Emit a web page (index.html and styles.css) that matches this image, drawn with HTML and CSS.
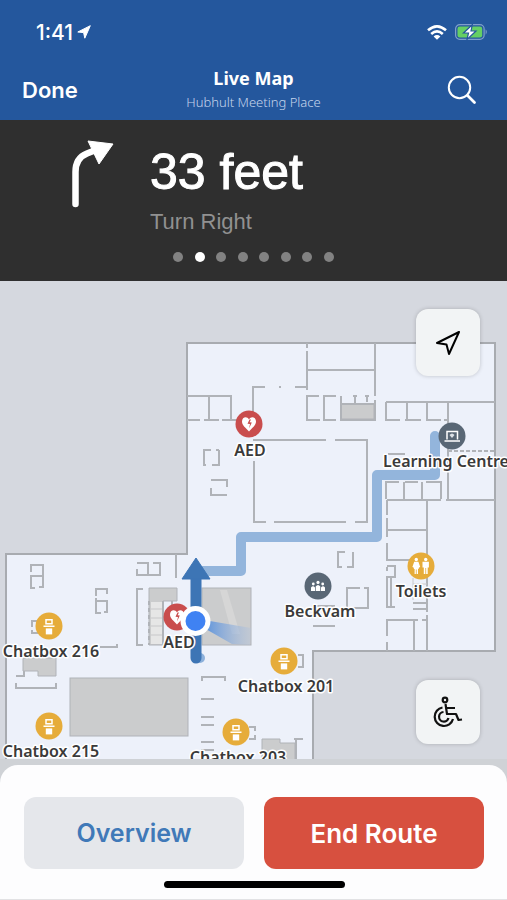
FILE: index.html
```html
<!DOCTYPE html>
<html lang="en">
<head>
  <meta charset="UTF-8"/>
  <meta name="viewport" content="width=device-width, initial-scale=1"/>
  <title>Live Map</title>
  <link rel="stylesheet" href="styles.css">
</head>
<body>

<header class="top">
  <div class="status-bar">
    <div class="time">1:41
      <svg width="14" height="14" viewBox="0 0 14 14"><path d="M13.3 0.7 L0.8 7 L6.6 7.6 L7.8 13.2 Z" fill="#fff" stroke="#fff" stroke-linejoin="round"/></svg>
    </div>
    <div class="status-icons">
      <svg width="20" height="15" viewBox="0 0 20 15" fill="none" stroke="#fff" stroke-width="2.6">
        <path d="M1 5.3 Q10 -2.6 19 5.3"/>
        <path d="M4.2 8.9 Q10 3.8 15.8 8.9"/>
        <path d="M10 14.8 L6.6 11.4 Q10 8.6 13.4 11.4 Z" fill="#fff" stroke="none"/>
      </svg>
      <svg width="33" height="16" viewBox="0 0 33 16">
        <rect x="0.6" y="0.6" width="28.5" height="14.8" rx="4.2" fill="none" stroke="#7f9fcb" stroke-width="1.2"/>
        <rect x="2.5" y="2.5" width="24.7" height="11" rx="2.3" fill="#65cf63"/>
        <path d="M30.6 5.3 Q33 8 30.6 10.7 Z" fill="#7f9fcb"/>
        <path d="M17.3 0.8 L8.5 9 H13.5 L12 15.4 L21 7 H16 Z" fill="#fff" stroke="#24579d" stroke-width="1.2"/>
      </svg>
    </div>
  </div>
  <nav class="nav-bar">
    <button class="done" type="button">Done</button>
    <div class="titles">
      <h1>Live Map</h1>
      <p>Hubhult Meeting Place</p>
    </div>
    <button class="search" type="button" aria-label="Search">
      <svg width="30" height="30" viewBox="0 0 30 30" fill="none" stroke="#fff" stroke-linecap="round">
        <circle cx="12.5" cy="12.5" r="10.7" stroke-width="2"/>
        <path d="M20.5 20.5 L27.5 27.5" stroke-width="2.8"/>
      </svg>
    </button>
  </nav>
</header>

<section class="banner">
  <div class="step">
    <svg class="turn" width="46" height="70" viewBox="0 0 46 70">
      <path d="M5.5 64 V32 Q5.5 18 17 13.5 L27 9.5" fill="none" stroke="#fff" stroke-width="6.5" stroke-linecap="round"/>
      <path d="M18 1 L43 4 L29 24 Z" fill="#fff" stroke="#fff" stroke-linejoin="round"/>
    </svg>
    <div>
      <div class="distance">33 feet</div>
      <div class="direction">Turn Right</div>
    </div>
  </div>
  <div class="dots">
    <span></span><span class="active"></span><span></span><span></span><span></span><span></span><span></span><span></span>
  </div>
</section>

<main class="map">
  <svg class="floor" viewBox="0 281 507 478" preserveAspectRatio="xMidYMid slice">
    <defs>
      <linearGradient id="cone" x1="0" x2="1">
        <stop offset="0" stop-color="#5b92dc"/>
        <stop offset="1" stop-color="#b4c4dc" stop-opacity="0.4"/>
      </linearGradient>
      <g id="chatbox">
        <circle r="13.5" fill="#e6ac3a"/>
        <path d="M-3 -6.3 H3 V-2.3 H-3 Z M-5.5 0.3 H5.5" fill="none" stroke="#fff" stroke-width="1.5"/>
        <rect x="-3.2" y="2.4" width="6.4" height="6" fill="#fff"/>
      </g>
      <g id="aed">
        <circle r="13.5" fill="#c94d4d"/>
        <path d="M0 7.5 C-3 4 -7 1.5 -7 -2.5 C-7 -7 -2 -8.2 0 -4.6 C2 -8.2 7 -7 7 -2.5 C7 1.5 3 4 0 7.5 Z" fill="#fff"/>
        <path d="M0.5 -4.5 L-1.5 -0.3 L1 0 L0 4.5 L2.8 -1.5 L0.6 -1.8 L2 -4.5 Z" fill="#c94d4d"/>
      </g>
    </defs>

    <!-- building outline -->
    <path class="outline" d="M187 343 H495 V651 H313 V765 H6 V554 H187 Z"/>

    <!-- blocked areas -->
    <g class="block">
      <rect x="341" y="404" width="33" height="15"/>
      <rect x="70" y="678" width="118" height="58"/>
      <rect x="202" y="588" width="49" height="57"/>
      <path d="M149 588 H177 V601 H163 V645 H149 Z"/>
      <path d="M23 658 H56 V676 H38 V671 H23 Z"/>
      <path d="M262 739 H280 V743 H295 V765 H262 Z"/>
    </g>
    <path d="M220 590 L227 590 L240 634 L232 634 Z" fill="#d6d6d6"/>
    <rect x="151" y="602" width="11" height="42" fill="#e6e6e6"/>

    <!-- upper wing -->
    <path class="wall" d="M307 343 V348 M307 351 V390 M307 370 H375 M375 343 V396 M375 400 V420
      M253 412 V387 H265 M279 387 H281 M295 387 H307
      M187 396 H231 V420 M209 396 V420 M187 420 H200 M204 420 H219 M222 420 H240
      M319 396 H307 V420 H320 M336 396 H324 V420 H336 M341 396 V420 H376 M341 404 H375 M355 396 V404 M353 396 H357 M367 396 V402 M365 396 H369
      M253 440 H326 M335 440 H367 V522 H355 M346 522 H274 M266 522 H254 V461
      M211 450 H204 V465 H206 M219 450 V465 H212 M216 450 H219
      M211 480 H227 V487 M211 488 V495 H227
      M386 402 H495 M386 402 V420 H400 M407 402 V420 M405 420 H421 M427 402 V420 M426 420 H441 M448 402 V500 M444 420 H448
      M388 454 H405 M399 482 H386 V499 M404 482 V499 M422 482 V499 M405 482 H418 M426 482 H441 V499 M387 500 H441 M446 500 H495
      M387 500 V515 M387 518 V537 M387 543 V560 H410 M387 530 H427 M427 500 V612 M427 615 V651
      M387 566 H395 V577 H387 V607 H395 M391 577 V607 M387 567 V571
      M387 636 V620 H418 M422 620 H428 M414 620 V651 M387 642 V651
      M345 552 H338 V567 H342 M353 552 V567 H347
      M360 588 H347 V608 H368 V588 H364 M313 606 H335 M313 626 H335"/>
    <path class="wall" d="M448 451 H495" stroke-dasharray="4 2"/>
    <path class="stairs" d="M413 578 V600 M413 584 H427 M413 590 H427 M413 596 H427"/>
    <path class="wall" d="M413 603 H427 M413 609 H427"/>

    <!-- lower wing -->
    <path class="wall" d="M176 554 V578
      M31 572 V565 H43 V587 H39 M31 575 V588 H35 M31 576 H43
      M96 596 V589 H107 V594 M96 598 V613 H101 M96 601 H107 V612 H104
      M145 563 H137 M137 569 V575 H160 V570 M139 563 H148 V575 M153 563 H160 V575
      M143 589 H137 V645 H143 M37 621 H32 V627 M32 630 V633 H38
      M100 647 H117 V644 M16 676 H24 V671 M16 683 V688 H56 V683
      M202 681 V677 H225 V681 M201 699 H214 M201 717 H214 M201 725 H214 M201 742 H214 M201 750 H214
      M298 655 H303 V667 H298 M249 727 H255 V731 M255 735 V739 H249 M294 739 H303 M296 739 V765"/>
    <path class="wall" d="M149 601 V645" stroke-dasharray="4 3"/>
    <path class="wall" d="M163 601 V645 M172 601 V616"/>
    <path class="stairs" d="M151 609 H162 M151 618 H162 M151 626 H162 M151 635 H162"/>

    <!-- route -->
    <path class="route" d="M435 436 V475 H377 V537 H241 V571 H198"/>
    <circle cx="200" cy="658" r="5" fill="#8db1db"/>

    <use href="#aed" x="249" y="424"/>
    <use href="#aed" x="177" y="617"/>
    <use href="#chatbox" x="49" y="626"/>
    <use href="#chatbox" x="49" y="726"/>
    <use href="#chatbox" x="284" y="661"/>
    <use href="#chatbox" x="236" y="732"/>

    <g transform="translate(452 436)">
      <circle r="13.5" fill="#596775"/>
      <path d="M-5 3.5 V-4.5 H5.5 V3.5 M-7.5 5 H8" fill="none" stroke="#fff" stroke-width="1.5"/>
      <path d="M-2.5 -1 Q0 -4 2.5 -1 L0 2 Z" fill="#dde2e7"/>
    </g>
    <g transform="translate(318 586)">
      <circle r="13.5" fill="#596775"/>
      <g fill="#fff">
        <circle cx="-4.7" cy="-2" r="1.4"/><circle cx="0" cy="-3.6" r="1.6"/><circle cx="4.7" cy="-2" r="1.4"/>
        <path d="M-7 5 V1.5 Q-5 -1 -3 1.5 V5 Z M-2.3 5 V0.5 Q0 -2.5 2.3 0.5 V5 Z M3 5 V1.5 Q5 -1 7 1.5 V5 Z"/>
      </g>
    </g>
    <g transform="translate(421 566)">
      <circle r="13.5" fill="#e6ac3a"/>
      <g fill="#fff">
        <circle cx="-4.7" cy="-6.5" r="1.7"/><circle cx="4.7" cy="-6.5" r="1.7"/>
        <path d="M-6.8 -4.3 H-2.6 L-0.8 1 L-2 1.5 L-2.5 3 H-3 V8 H-6.4 V3 H-7 L-7.4 1.5 L-8.6 1 Z"/>
        <path d="M1.5 -4.3 H7.9 V1.5 H6.7 V8 H2.8 V1.5 H1.5 Z"/>
      </g>
      <path d="M4.7 2 V8 M-4.7 3.5 V8" stroke="#e6ac3a" stroke-width="0.8"/>
    </g>

    <!-- heading -->
    <path d="M204 620 L251 628 L250 645 L232 644 L204 628 Z" fill="url(#cone)"/>
    <path d="M196 575 V658" stroke="#3d75b5" stroke-width="11" stroke-linecap="round"/>
    <path d="M196 558 L210 579 H182 Z" fill="#3d75b5" stroke="#3d75b5" stroke-linejoin="round"/>

    <g class="labels">
      <text x="250" y="456">AED</text>
      <text x="446" y="467">Learning Centre</text>
      <text x="421" y="597">Toilets</text>
      <text x="320" y="617">Beckvam</text>
      <text x="179" y="648">AED</text>
      <text x="51" y="657">Chatbox 216</text>
      <text x="51" y="757">Chatbox 215</text>
      <text x="286" y="692">Chatbox 201</text>
      <text x="238" y="763">Chatbox 203</text>
    </g>

    <!-- current position -->
    <circle cx="195.5" cy="621" r="15" fill="#fff"/>
    <circle cx="195.5" cy="621" r="10" fill="#3f82f3"/>
  </svg>

  <div class="map-buttons">
    <button class="locate" type="button" aria-label="Locate me">
      <svg width="28" height="28" viewBox="0 0 28 28"><path d="M25 3 L3 14 L12.5 15.5 L15 25 Z" fill="none" stroke="#000" stroke-width="2" stroke-linejoin="round"/></svg>
    </button>
    <button type="button" aria-label="Accessible route">
      <svg width="30" height="32" viewBox="0 0 30 32" fill="none" stroke="#111" stroke-width="2.2" stroke-linejoin="round">
        <circle cx="12" cy="4" r="2.3"/>
        <path d="M12.5 8 L14 18 H23 L25.5 24 L29 23.5 M13 12 H22"/>
        <path d="M9.5 11.5 A9.3 9.3 0 1 0 20 23"/>
        <path d="M10.5 16 A4.8 4.8 0 1 0 15.5 22"/>
      </svg>
    </button>
  </div>
</main>

<footer class="bottom">
  <div class="sheet">
    <div class="actions">
      <button class="overview" type="button">Overview</button>
      <button class="end-route" type="button">End Route</button>
    </div>
    <div class="home-bar"></div>
  </div>
</footer>

</body>
</html>
```
FILE: styles.css
```css
* {
  box-sizing: border-box;
}
body {
  margin: 0;
  min-height: 100vh;
  display: flex;
  flex-direction: column;
  font-family: Inter, "Liberation Sans", sans-serif;
  background: #d5d8df;
}
button {
  border: 0;
  padding: 0;
  font-family: inherit;
  cursor: pointer;
}
svg {
  display: block;
}

/* header */
.top {
  background: #24579d;
  color: #fff;
}
.status-bar {
  height: 60px;
  padding: 4px 19px 0 36px;
  display: flex;
  align-items: center;
  justify-content: space-between;
}
.time {
  display: flex;
  align-items: center;
  gap: 4px;
  font-size: 21px;
  font-weight: 500;
}
.status-icons {
  display: flex;
  align-items: center;
  gap: 8px;
}
.nav-bar {
  height: 60px;
  padding: 0 22px;
  display: grid;
  grid-template-columns: 1fr auto 1fr;
  align-items: center;
}
.done {
  justify-self: start;
  background: none;
  color: #fff;
  font-size: 22px;
  font-weight: 600;
}
.titles {
  text-align: center;
  font-family: "Noto Sans", sans-serif;
}
.titles h1 {
  margin: 0;
  font-size: 18px;
  line-height: 24px;
  font-weight: 700;
}
.titles p {
  margin: 0;
  font-size: 13px;
  line-height: 24px;
  font-weight: 300;
  color: #c5d5ec;
}
.search {
  justify-self: end;
  background: none;
  padding-right: 8px;
}

/* next turn */
.banner {
  background: #2f2f2f;
  padding: 20px 0 19px;
  font-family: "Liberation Sans", Arial, sans-serif;
}
.step {
  display: flex;
  gap: 34px;
  padding-left: 70px;
}
.distance {
  color: #fff;
  font-size: 50px;
  line-height: 64px;
  -webkit-text-stroke: 1px #fff;
}
.direction {
  color: #919191;
  font-size: 22px;
  line-height: 36px;
}
.dots {
  width: 161px;
  display: flex;
  justify-content: space-between;
  margin: 12px auto 0;
}
.dots span {
  width: 10px;
  height: 10px;
  border-radius: 50%;
  background: #828282;
}
.dots .active {
  background: #fff;
}

/* map */
.map {
  flex: 1;
  display: grid;
  min-height: 400px;
  overflow: hidden;
}
.floor,
.map-buttons {
  grid-area: 1 / 1;
}
.floor {
  width: 100%;
  height: 100%;
}
.outline {
  fill: #edf1fa;
  stroke: #a8abb0;
  stroke-width: 2;
}
.wall {
  fill: none;
  stroke: #b0b3b8;
  stroke-width: 2;
}
.stairs {
  fill: none;
  stroke: #c8c8ca;
}
.block {
  fill: #cbcccd;
  stroke: #b0b3b8;
}
.route {
  fill: none;
  stroke: #93b5dc;
  stroke-width: 10;
  stroke-linecap: round;
  stroke-linejoin: round;
}
.labels text {
  font-family: "Noto Sans", sans-serif;
  font-size: 16px;
  font-weight: 600;
  text-anchor: middle;
  fill: #3a3a3a;
  stroke: #fff;
  stroke-width: 3;
  stroke-linejoin: round;
  paint-order: stroke;
}
.map-buttons {
  display: flex;
  flex-direction: column;
  align-items: flex-end;
  justify-content: space-between;
  padding: 28px 27px 15px 0;
}
.map-buttons button {
  width: 64px;
  height: 64px;
  display: grid;
  place-items: center;
  border-radius: 12px;
  background: #f2f4f5;
  box-shadow: 0 0 4px rgba(0,0,0,0.2);
}
.map-buttons .locate {
  height: 67px;
}

/* bottom sheet */
.bottom {
  background: #cfd2d6;
  padding-top: 6px;
}
.sheet {
  background: #fdfdfe;
  border-radius: 18px 18px 0 0;
  border-bottom: 1px solid #e2e2e4;
  padding: 32px 23px 11px 24px;
}
.actions {
  display: flex;
  gap: 20px;
}
.actions button {
  flex: 1;
  height: 72px;
  border-radius: 12px;
  font-size: 26px;
  font-weight: 600;
}
.actions .overview {
  background: #e5e7eb;
  color: #4079b8;
  font-size: 25px;
}
.end-route {
  background: #d7503f;
  color: #fff;
}
.home-bar {
  width: 181px;
  height: 7px;
  margin: 12px auto 0;
  border-radius: 4px;
  background: #000;
}
```
